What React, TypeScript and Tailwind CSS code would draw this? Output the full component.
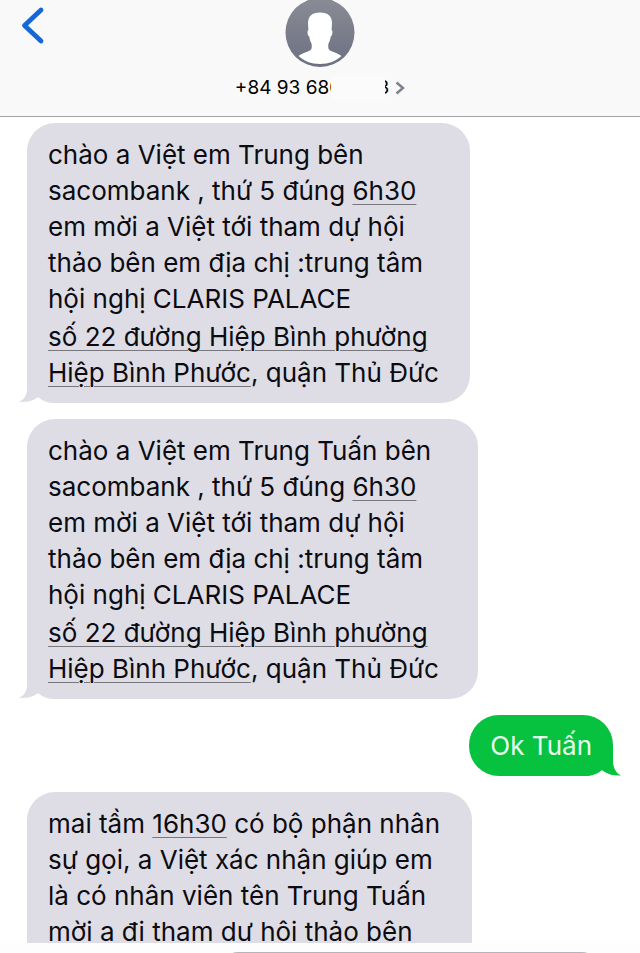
import type { ReactNode } from "react";

const FONT = "font-['Inter','Noto_Sans',sans-serif]";

function DetectedLink({ href, children }: { href: string; children: ReactNode }) {
  return (
    <a
      href={href}
      className="underline decoration-[#77777c] decoration-1 underline-offset-4"
    >
      {children}
    </a>
  );
}

function Incoming({ children, shape }: { children: ReactNode; shape: string }) {
  return (
    <div
      className={`relative ml-[27px] shrink-0 space-y-0.5 bg-[#dedde6] pt-3.5 pb-2.5 pl-[21px] ${shape}`}
    >
      {children}
    </div>
  );
}

function IncomingTail() {
  return (
    <svg
      className="absolute bottom-0 -left-2 h-7 w-9"
      viewBox="0 0 36 28"
      aria-hidden="true"
    >
      <path d="M0 28 V27 C7 28 14 26 19 22 C24 26 29 28 36 28 Z" fill="#fff" />
      <path d="M8 10 V14 C8 20 5 25 0 27 C7 27.500 14 26 19 22 V10 Z" fill="#dedde6" />
    </svg>
  );
}

function Invitation({ name, shape }: { name: string; shape: string }) {
  return (
    <Incoming shape={`rounded-[28px] rounded-bl-none ${shape}`}>
      <p>
        chào a Việt em {name} bên
        <br />
        sacombank , thứ 5 đúng <DetectedLink href="#time">6h30</DetectedLink>
        <br />
        em mời a Việt tới tham dự hội
        <br />
        thảo bên em địa chị :trung tâm
        <br />
        hội nghị CLARIS PALACE
      </p>
      <p>
        <DetectedLink href="#map">
          số 22 đường Hiệp Bình phường
          <br />
          Hiệp Bình Phước
        </DetectedLink>
        , quận Thủ Đức
      </p>
      <IncomingTail />
    </Incoming>
  );
}

export default function App() {
  return (
    <div className={`flex h-screen flex-col overflow-hidden bg-white text-[#0b0b10] ${FONT}`}>
      <header className="grid h-[117px] shrink-0 grid-cols-[1fr_auto_1fr] border-b border-[#a3a3a6] bg-[#f9f9f9]">
        <button type="button" aria-label="Back" className="mt-1.5 ml-5 h-10 w-7 self-start">
          <svg viewBox="0 0 28 40" className="h-10 w-7" aria-hidden="true">
            <path
              d="M21 4 L4.500 19.500 L21 35"
              fill="none"
              stroke="#1467d8"
              strokeWidth="4.800"
              strokeLinecap="round"
              strokeLinejoin="round"
            />
          </svg>
        </button>
        <div className="flex flex-col items-center">
          <svg viewBox="0 0 70 68" className="h-[68px] w-[70px]" aria-hidden="true">
            <defs>
              <linearGradient id="avatar" x1="0" y1="0" x2="0" y2="1">
                <stop offset="0" stopColor="#8a8b95" />
                <stop offset="1" stopColor="#6c7080" />
              </linearGradient>
            </defs>
            <circle cx="35" cy="32.500" r="34.500" fill="url(#avatar)" />
            <path
              d="M35 12.500 C43 12.500 47 16.500 47 23 L46.600 30 C48 30.500 47.600 35.500 45.800 36.500 C45.300 40 44.300 42 43.300 44 V48 C44 52 52 52 56.500 56 C51 61 44 64 35 64 C26 64 19 61 13.500 56 C18 52 26 52 26.700 48 V44 C25.700 42 24.700 40 24.200 36.500 C22.400 35.500 22 30.500 23.400 30 L23 23 C23 16.500 27 12.500 35 12.500 Z"
              fill="#fff"
            />
          </svg>
          <button
            type="button"
            className="mt-2 flex items-center text-[19px] leading-6 text-black"
          >
            <span>+84 93 68</span>
            <span className="w-0.5 overflow-hidden">0</span>
            <span className="h-6 w-[54px] bg-[#fbfbfb]" />
            <span className="flex w-1 justify-end overflow-hidden">3</span>
            <svg viewBox="0 0 10 14" className="ml-1.5 h-3.5 w-2.5" aria-hidden="true">
              <path
                d="M1.500 1.500 L8 7 L1.500 12.500"
                fill="none"
                stroke="#7d808a"
                strokeWidth="2.400"
              />
            </svg>
          </button>
        </div>
      </header>

      <main className="flex min-h-0 flex-1 flex-col gap-4 overflow-hidden pt-1.5 text-[26px] leading-[36px]">
        <Invitation name="Trung" shape="w-[443px]" />
        <Invitation name="Trung Tuấn" shape="w-[451px]" />

        <div className="relative mr-[27px] shrink-0 self-end rounded-[30px] rounded-br-none bg-[#06c23f] px-[21px] pt-[13px] pb-3 text-[#e9ffea]">
          <p>Ok Tuấn</p>
          <svg
            className="absolute -right-2 bottom-0 h-7 w-9"
            viewBox="0 0 36 28"
            aria-hidden="true"
          >
            <path d="M36 28 V27.500 C29 28 23 26 17 22 C12 26 7 28 0 28 Z" fill="#fff" />
            <path
              d="M28 4 V12 C28 20 31 25 36 27.500 C29 28 23 26 17 22 V16 Z"
              fill="#06c23f"
            />
          </svg>
        </div>

        <Incoming shape="w-[445px] rounded-t-[28px]">
          <p>
            mai tầm <DetectedLink href="#time">16h30</DetectedLink> có bộ phận nhân
            <br />
            sự gọi, a Việt xác nhận giúp em
            <br />
            là có nhân viên tên Trung Tuấn
            <br />
            mời a đi tham dự hội thảo bên
          </p>
        </Incoming>
      </main>

      <footer className="flex h-2.5 shrink-0 items-start overflow-hidden bg-[#fdfdfd] pt-[9px] pr-10 pl-[220px]">
        <input
          type="text"
          aria-label="Message"
          className="h-12 w-full rounded-[18px] border border-[#b4b4ba] bg-white outline-none"
        />
      </footer>
    </div>
  );
}
